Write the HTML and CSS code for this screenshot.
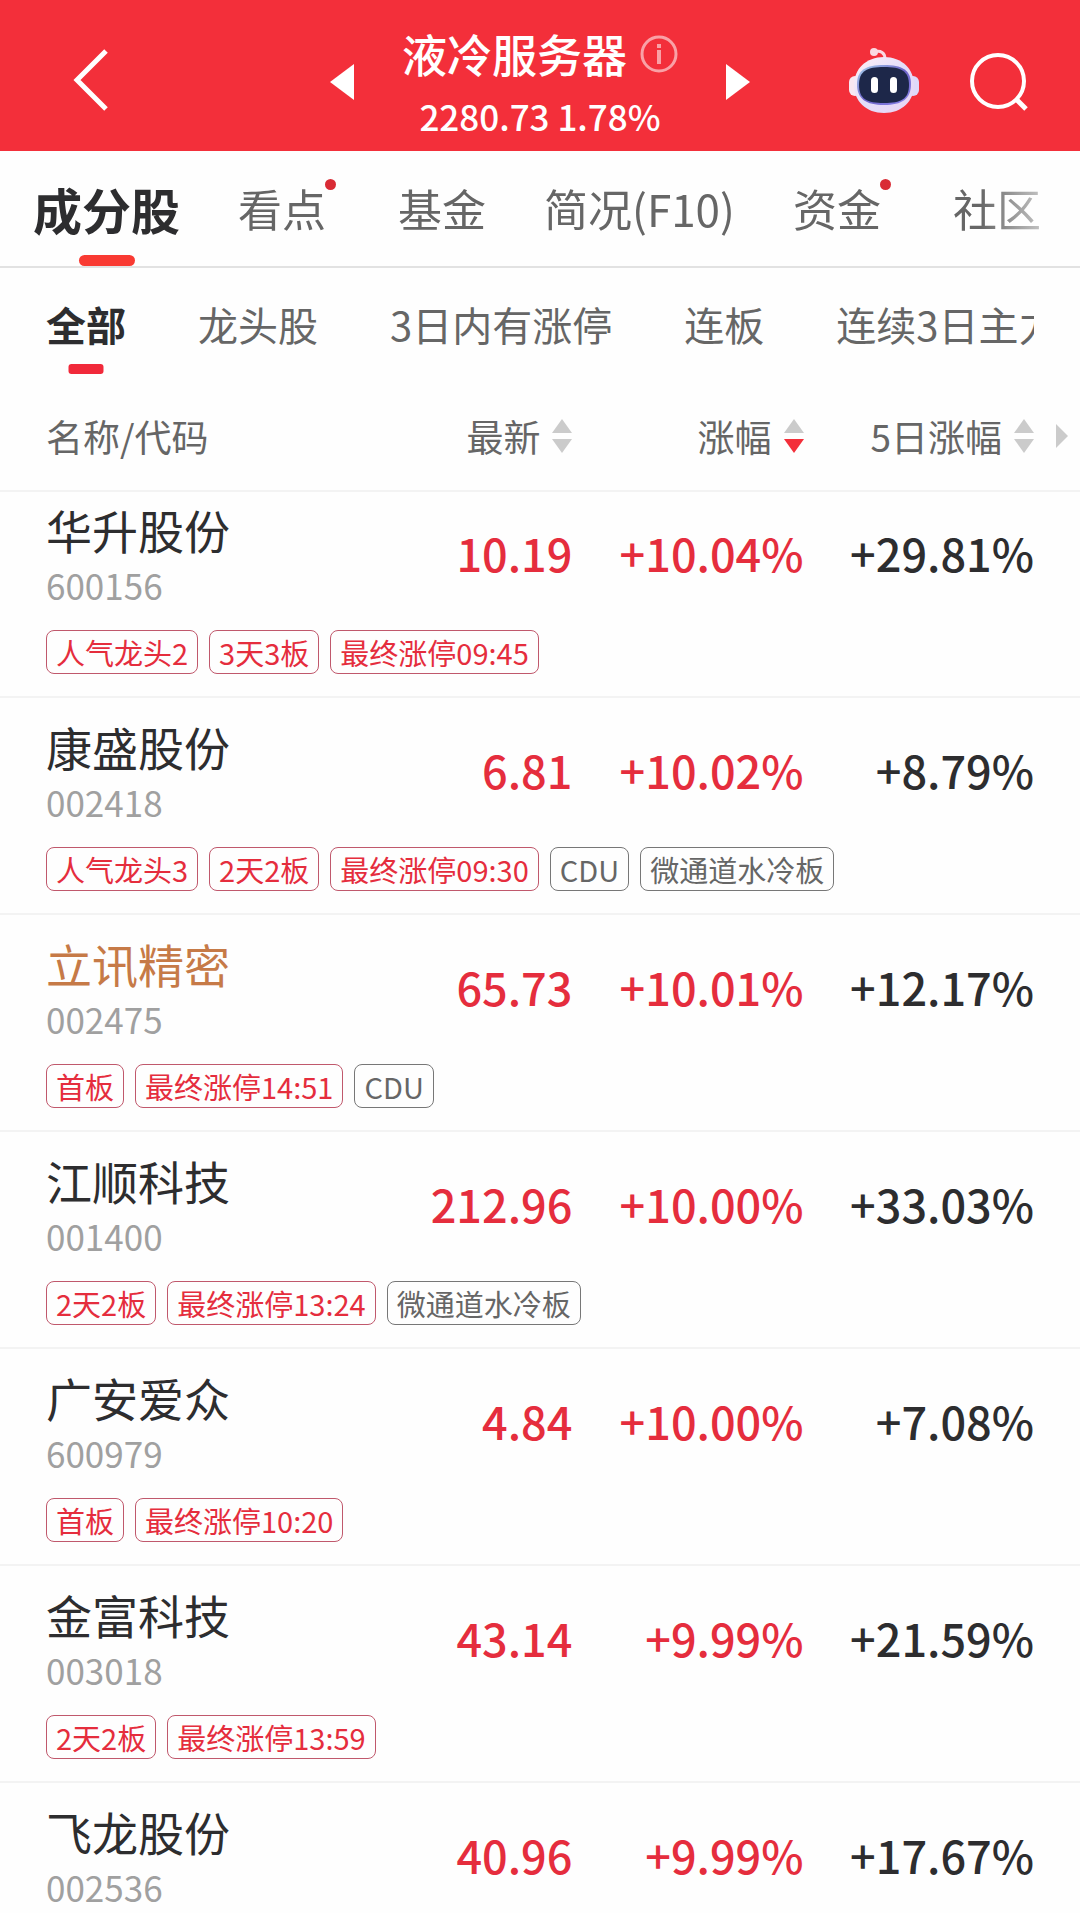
FILE: index.html
```html
<!DOCTYPE html>
<html lang="zh-CN">
<head>
<meta charset="utf-8">
<meta name="viewport" content="width=device-width, initial-scale=1">
<title>液冷服务器</title>
<link rel="stylesheet" href="styles.css">
</head>
<body>
<header class="topbar">
  <button class="icon-btn back" type="button" aria-label="返回">
    <svg width="36" height="62" viewBox="0 0 36 62" fill="none" stroke="#fff" stroke-width="5"><path d="M33 2 4 31l29 29"/></svg>
  </button>
  <div class="switcher">
    <button class="icon-btn" type="button" aria-label="上一个板块">
      <svg width="24" height="36" viewBox="0 0 24 36"><path d="M24 0v36L0 18z" fill="#fff"/></svg>
    </button>
    <div class="heading">
      <h1 class="title">液冷服务器
        <button class="icon-btn" type="button" aria-label="板块说明">
          <svg class="info" width="38" height="38" viewBox="0 0 38 38" fill="none" stroke="#fff"><circle cx="19" cy="19" r="17" stroke-width="3"/><path d="M19 15v14M19 9v4" stroke-width="4"/></svg>
        </button>
      </h1>
      <p class="quote">2280.73 1.78%</p>
    </div>
    <button class="icon-btn" type="button" aria-label="下一个板块">
      <svg width="24" height="36" viewBox="0 0 24 36"><path d="M0 0v36l24-18z" fill="#fff"/></svg>
    </button>
  </div>
  <div class="actions">
    <button class="icon-btn robot" type="button" aria-label="智能助手">
      <svg width="70" height="66" viewBox="0 0 70 66">
        <defs>
          <linearGradient id="shell" x1="0" y1="0" x2="1" y2="1"><stop offset="0" stop-color="#fff1f6"/><stop offset=".5" stop-color="#e3ddfa"/><stop offset="1" stop-color="#e9d4f2"/></linearGradient>
          <linearGradient id="rim" x1="0" y1="0" x2="1" y2="1"><stop offset="0" stop-color="#a9d4ee"/><stop offset=".5" stop-color="#6d63c8"/><stop offset="1" stop-color="#8a84ea"/></linearGradient>
        </defs>
        <path d="M25 5c7-2 11 1 11 7" fill="none" stroke="#fbd9e2" stroke-width="3"/>
        <circle cx="25" cy="5" r="4" fill="#fbd9e2"/>
        <rect x="0" y="29" width="12" height="20" rx="6" fill="#f8e7f1"/>
        <rect x="58" y="29" width="12" height="20" rx="6" fill="#ded8fa"/>
        <path d="M35 10c18 0 30 12 30 28S53 66 35 66 5 54 5 38s12-28 30-28z" fill="url(#shell)"/>
        <path d="M35 18c18 0 27 5 27 19 0 15-9 21-27 21S8 52 8 37c0-14 9-19 27-19z" fill="url(#rim)"/>
        <path d="M35 20c17 0 25 4 25 18s-8 18-25 18-25-4-25-18 8-18 25-18z" fill="#1d2749"/>
        <rect x="22" y="30" width="7" height="16" rx="3.5" fill="#fff"/>
        <rect x="41" y="30" width="7" height="16" rx="3.5" fill="#fff"/>
      </svg>
    </button>
    <button class="icon-btn" type="button" aria-label="搜索">
      <svg width="58" height="58" viewBox="0 0 58 58" fill="none" stroke="#fff" stroke-width="4"><circle cx="28" cy="28" r="26"/><path d="m46 46 10 10" stroke-width="5"/></svg>
    </button>
  </div>
</header>

<nav class="tabs" aria-label="板块栏目">
  <div class="tabs-track">
    <a class="tab is-active" href="#stocks" aria-current="page">成分股</a>
    <a class="tab has-dot" href="#views">看点</a>
    <a class="tab" href="#funds">基金</a>
    <a class="tab" href="#profile">简况(F10)</a>
    <a class="tab has-dot" href="#capital">资金</a>
    <a class="tab" href="#community">社区</a>
  </div>
</nav>

<main id="stocks">
  <div class="filters">
    <button class="filter is-active" type="button" aria-pressed="true">全部</button>
    <button class="filter" type="button">龙头股</button>
    <button class="filter" type="button">3日内有涨停</button>
    <button class="filter" type="button">连板</button>
    <button class="filter" type="button">连续3日主力</button>
  </div>

  <table class="stocks">
    <colgroup><col class="c-name"><col class="c-price"><col class="c-change"><col class="c-five"></colgroup>
    <thead>
      <tr>
        <th scope="col">名称/代码</th>
        <th scope="col"><button class="sort" type="button">最新<svg class="arrows" width="20" height="34" viewBox="0 0 20 34"><path class="asc" d="M10 0l10 14H0z"/><path class="desc" d="M0 20h20L10 34z"/></svg></button></th>
        <th scope="col" aria-sort="descending"><button class="sort" type="button">涨幅<svg class="arrows" width="20" height="34" viewBox="0 0 20 34"><path class="asc" d="M10 0l10 14H0z"/><path class="desc" d="M0 20h20L10 34z"/></svg></button></th>
        <th scope="col" class="last"><div class="last-inner"><button class="sort" type="button">5日涨幅<svg class="arrows" width="20" height="34" viewBox="0 0 20 34"><path class="asc" d="M10 0l10 14H0z"/><path class="desc" d="M0 20h20L10 34z"/></svg></button><button class="icon-btn" type="button" aria-label="更多列"><svg width="12" height="24" viewBox="0 0 12 24"><path d="M0 0v24l12-12z" fill="#cbcbcb"/></svg></button></div></th>
      </tr>
    </thead>
    <tbody class="first">
      <tr class="main"><th scope="row"><span class="name">华升股份</span><span class="code">600156</span></th><td class="up">10.19</td><td class="up">+10.04%</td><td>+29.81%</td></tr>
      <tr class="extra"><td colspan="4"><ul class="tags"><li class="tag hot">人气龙头2</li><li class="tag hot">3天3板</li><li class="tag hot">最终涨停09:45</li></ul></td></tr>
    </tbody>
    <tbody>
      <tr class="main"><th scope="row"><span class="name">康盛股份</span><span class="code">002418</span></th><td class="up">6.81</td><td class="up">+10.02%</td><td>+8.79%</td></tr>
      <tr class="extra"><td colspan="4"><ul class="tags"><li class="tag hot">人气龙头3</li><li class="tag hot">2天2板</li><li class="tag hot">最终涨停09:30</li><li class="tag">CDU</li><li class="tag">微通道水冷板</li></ul></td></tr>
    </tbody>
    <tbody>
      <tr class="main"><th scope="row"><span class="name held">立讯精密</span><span class="code">002475</span></th><td class="up">65.73</td><td class="up">+10.01%</td><td>+12.17%</td></tr>
      <tr class="extra"><td colspan="4"><ul class="tags"><li class="tag hot">首板</li><li class="tag hot">最终涨停14:51</li><li class="tag">CDU</li></ul></td></tr>
    </tbody>
    <tbody>
      <tr class="main"><th scope="row"><span class="name">江顺科技</span><span class="code">001400</span></th><td class="up">212.96</td><td class="up">+10.00%</td><td>+33.03%</td></tr>
      <tr class="extra"><td colspan="4"><ul class="tags"><li class="tag hot">2天2板</li><li class="tag hot">最终涨停13:24</li><li class="tag">微通道水冷板</li></ul></td></tr>
    </tbody>
    <tbody>
      <tr class="main"><th scope="row"><span class="name">广安爱众</span><span class="code">600979</span></th><td class="up">4.84</td><td class="up">+10.00%</td><td>+7.08%</td></tr>
      <tr class="extra"><td colspan="4"><ul class="tags"><li class="tag hot">首板</li><li class="tag hot">最终涨停10:20</li></ul></td></tr>
    </tbody>
    <tbody>
      <tr class="main"><th scope="row"><span class="name">金富科技</span><span class="code">003018</span></th><td class="up">43.14</td><td class="up">+9.99%</td><td>+21.59%</td></tr>
      <tr class="extra"><td colspan="4"><ul class="tags"><li class="tag hot">2天2板</li><li class="tag hot">最终涨停13:59</li></ul></td></tr>
    </tbody>
    <tbody>
      <tr class="main"><th scope="row"><span class="name">飞龙股份</span><span class="code">002536</span></th><td class="up">40.96</td><td class="up">+9.99%</td><td>+17.67%</td></tr>
    </tbody>
  </table>
</main>
</body>
</html>
```
FILE: styles.css
```css
:root {
  --brand: #f32f3a;
  --up: #e52d3d;
  --ink: #2d2d2f;
  --muted: #666;
  --faint: #a0a0a0;
  --rule: #f3f3f3;
}

* { box-sizing: border-box; }

body {
  margin: 0;
  background: #fefefe;
  color: var(--ink);
  font-family: "Noto Sans CJK SC", "Noto Sans", sans-serif;
}

button {
  margin: 0;
  padding: 0;
  border: 0;
  background: none;
  color: inherit;
  font: inherit;
}

svg { display: block; }

.icon-btn { display: flex; flex: none; }

/* Top bar */
.topbar {
  display: grid;
  grid-template-columns: 1fr 420px 1fr;
  align-items: center;
  padding: 12px 52px 0;
  background: var(--brand);
  color: #fff;
}

.back { padding: 0 0 4px 21px; }
.robot { padding-bottom: 4px; }

.switcher {
  display: flex;
  align-items: center;
  justify-content: space-between;
}

.heading { padding: 7px 0 8px; }

.title {
  display: flex;
  align-items: center;
  gap: 13px;
  margin: 0;
  font-size: 45px;
  font-weight: 500;
  line-height: 70px;
}

.info { opacity: .55; }

.quote {
  margin: 0;
  font-size: 35px;
  font-weight: 500;
  line-height: 54px;
  text-align: center;
}

.actions {
  display: flex;
  align-items: center;
  justify-content: flex-end;
  gap: 51px;
}

/* Main tabs */
.tabs {
  padding: 0 40px 0 33px;
  border-bottom: 2px solid #e2e2e2;
}

.tabs-track {
  display: flex;
  gap: 58px;
  overflow: hidden;
  -webkit-mask-image: linear-gradient(90deg, #000 calc(100% - 60px), rgba(0, 0, 0, .4));
  mask-image: linear-gradient(90deg, #000 calc(100% - 60px), rgba(0, 0, 0, .4));
}

.tab {
  position: relative;
  flex: none;
  color: var(--muted);
  font-size: 44px;
  line-height: 115px;
  text-decoration: none;
}

.tab.is-active {
  color: var(--ink);
  font-size: 49px;
  font-weight: 700;
}

.tab.is-active::after,
.filter.is-active::after {
  content: "";
  position: absolute;
  bottom: 0;
  left: 50%;
  width: 56px;
  height: 11px;
  border-radius: 6px;
  background: #f93a32;
  transform: translateX(-50%);
}

.has-dot { padding-right: 14px; }

.has-dot::after {
  content: "";
  position: absolute;
  top: 28px;
  right: 4px;
  width: 11px;
  height: 11px;
  border-radius: 50%;
  background: #d92b35;
}

/* Filters */
.filters {
  display: flex;
  gap: 72px;
  margin: 0 46px;
  padding: 26px 0 10px;
  overflow: hidden;
}

.filter {
  position: relative;
  flex: none;
  padding-bottom: 20px;
  color: var(--muted);
  font-size: 40px;
  line-height: 60px;
}

.filter.is-active {
  color: var(--ink);
  font-weight: 700;
}

.filter.is-active::after {
  width: 35px;
  height: 10px;
  border-radius: 3px;
  background: #f1293a;
}

/* Stock table */
.stocks {
  width: 100%;
  table-layout: fixed;
  border-collapse: collapse;
}

.c-name { width: 32%; }
.c-price { width: 21%; }
.c-change { width: 21.4%; }
.c-five { width: 25.6%; }

.stocks th,
.stocks td {
  padding: 0;
  font-weight: 400;
  text-align: right;
  white-space: nowrap;
}

.stocks th:first-child,
.stocks td:first-child { padding-left: 46px; text-align: left; }

.stocks td:last-child { padding-right: 46px; }

.stocks thead th {
  height: 107px;
  padding-bottom: 2px;
  color: var(--muted);
  font-size: 37px;
  line-height: 54px;
}

.sort {
  display: flex;
  align-items: center;
  gap: 12px;
  margin-left: auto;
}

.stocks thead .last { padding-right: 12px; }

.last-inner {
  display: flex;
  align-items: center;
  gap: 22px;
}

.arrows { fill: #cbcbcb; }
[aria-sort="descending"] .desc { fill: var(--brand); }

tbody { border-top: 2px solid var(--rule); }

.stocks .main > * { padding-top: 18px; }
.stocks .first .main > * { padding-top: 7px; }

.name,
.code { display: block; }

.name {
  font-size: 46px;
  line-height: 60px;
}

.held { color: #c67a47; }

.code {
  color: var(--faint);
  font-size: 35px;
  line-height: 52px;
}

.stocks .main td {
  padding-bottom: 4px;
  font-size: 45px;
  font-weight: 500;
  line-height: 60px;
}

.stocks .main .up { color: var(--up); }

.tags {
  display: flex;
  gap: 11px;
  margin: 0;
  padding: 19px 0 22px;
  list-style: none;
}

.tag {
  padding: 0 9px;
  border: 1px solid #777;
  border-radius: 8px;
  color: var(--muted);
  font-size: 29px;
  line-height: 42px;
}

.tag.hot {
  border-color: #c0586c;
  color: var(--up);
}
```
